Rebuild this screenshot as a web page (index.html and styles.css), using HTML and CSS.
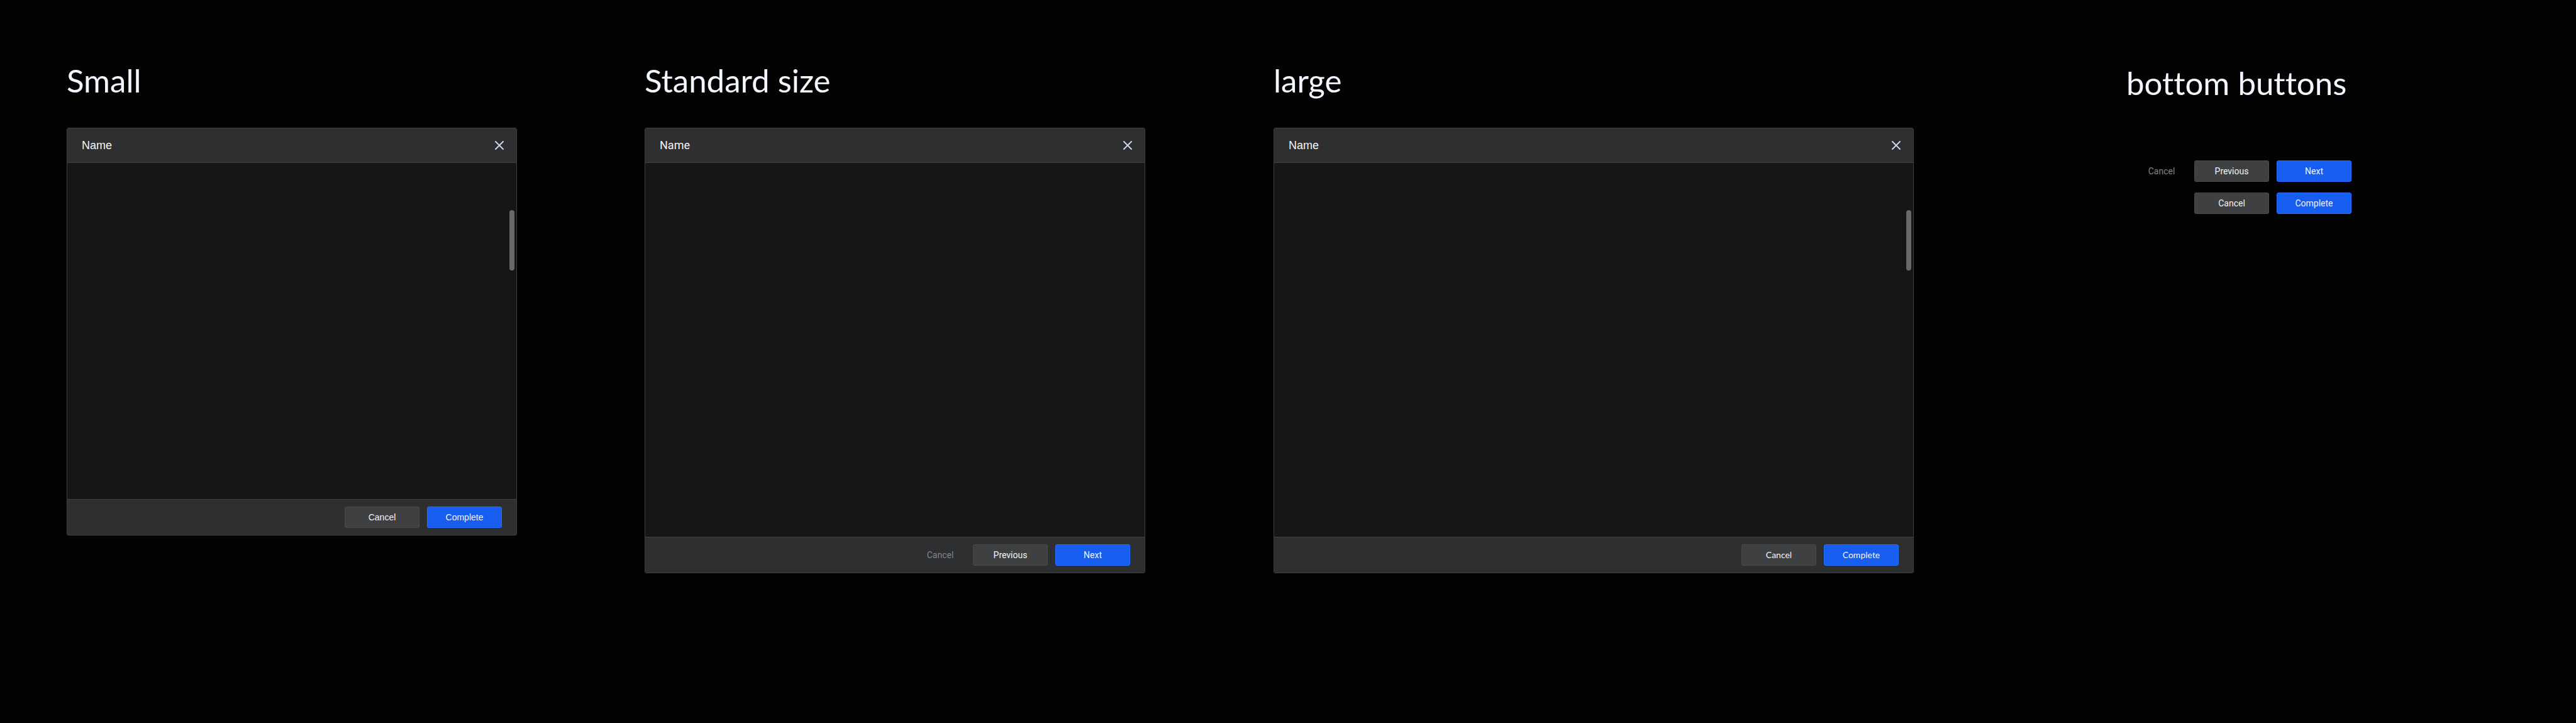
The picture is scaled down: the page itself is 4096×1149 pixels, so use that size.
FILE: index.html
```html
<!DOCTYPE html>
<html lang="en">
<head>
<meta charset="utf-8">
<title>Dialog sizes</title>
<link rel="stylesheet" href="styles.css">
</head>
<body>
<main class="board">
  <section class="column column-small">
    <h1 class="title">Small</h1>
    <div class="dialog font-liberation" role="dialog" aria-labelledby="name-small">
      <header class="dialog-header">
        <h2 class="dialog-name" id="name-small">Name</h2>
        <button class="close" type="button" aria-label="Close"><svg class="close-icon" viewBox="0 0 14 14" aria-hidden="true"><path d="M1 1L13 13M13 1L1 13"/></svg></button>
      </header>
      <div class="dialog-body dialog-body-short"><div class="scroll-thumb"></div></div>
      <footer class="dialog-footer">
        <button class="btn btn-secondary" type="button">Cancel</button>
        <button class="btn btn-primary" type="button">Complete</button>
      </footer>
    </div>
  </section>

  <section class="column column-standard">
    <h1 class="title">Standard size</h1>
    <div class="dialog font-roboto" role="dialog" aria-labelledby="name-standard">
      <header class="dialog-header">
        <h2 class="dialog-name" id="name-standard">Name</h2>
        <button class="close" type="button" aria-label="Close"><svg class="close-icon" viewBox="0 0 14 14" aria-hidden="true"><path d="M1 1L13 13M13 1L1 13"/></svg></button>
      </header>
      <div class="dialog-body"></div>
      <footer class="dialog-footer">
        <button class="btn btn-ghost" type="button">Cancel</button>
        <button class="btn btn-secondary" type="button">Previous</button>
        <button class="btn btn-primary" type="button">Next</button>
      </footer>
    </div>
  </section>

  <section class="column column-large">
    <h1 class="title">large</h1>
    <div class="dialog font-lato" role="dialog" aria-labelledby="name-large">
      <header class="dialog-header">
        <h2 class="dialog-name font-liberation" id="name-large">Name</h2>
        <button class="close" type="button" aria-label="Close"><svg class="close-icon" viewBox="0 0 14 14" aria-hidden="true"><path d="M1 1L13 13M13 1L1 13"/></svg></button>
      </header>
      <div class="dialog-body"><div class="scroll-thumb"></div></div>
      <footer class="dialog-footer">
        <button class="btn btn-secondary" type="button">Cancel</button>
        <button class="btn btn-primary" type="button">Complete</button>
      </footer>
    </div>
  </section>

  <section class="column column-buttons">
    <h1 class="title">bottom buttons</h1>
    <div class="button-sets font-roboto">
      <div class="button-row">
        <button class="btn btn-ghost" type="button">Cancel</button>
        <button class="btn btn-secondary" type="button">Previous</button>
        <button class="btn btn-primary" type="button">Next</button>
      </div>
      <div class="button-row">
        <button class="btn btn-secondary" type="button">Cancel</button>
        <button class="btn btn-primary" type="button">Complete</button>
      </div>
    </div>
  </section>
</main>
</body>
</html>
```
FILE: styles.css
```css
* {
  box-sizing: border-box;
}

body {
  margin: 0;
  background: #030303;
  color: #f2f6ff;
  font-family: Lato, sans-serif;
}

.board {
  display: grid;
  grid-template-columns: minmax(0, 919fr) minmax(0, 1000fr) minmax(0, 1356fr) minmax(0, 715fr);
  align-items: start;
  min-height: 100vh;
  padding: 96px 0 96px 106px;
}

.column-small { padding-right: 203px; }
.column-standard { padding-right: 204px; }
.column-large { padding-right: 338px; }
.column-buttons { padding: 4px 357px 0 0; }

.font-liberation { font-family: "Liberation Sans", Arial, sans-serif; }
.font-roboto { font-family: Roboto, sans-serif; }
.font-lato { font-family: Lato, sans-serif; }

.title {
  margin: 0 0 43px;
  font-size: 51px;
  line-height: 64px;
  font-weight: 400;
  font-variant-ligatures: none;
  white-space: nowrap;
}

.dialog {
  border: 1px solid #3e3f41;
  border-radius: 3px;
  background: #161616;
  overflow: hidden;
}

.dialog-header {
  display: flex;
  align-items: center;
  justify-content: space-between;
  height: 55px;
  padding: 0 16px 0 23px;
  background: #2e2f31;
  border-bottom: 1px solid #3e3f41;
}

.dialog-name {
  margin: 0;
  font-size: 18px;
  line-height: 24px;
  font-weight: 400;
  color: #f5f5f5;
}

.close {
  display: flex;
  padding: 4px;
  border: 0;
  background: none;
}

.close-icon {
  width: 14px;
  height: 14px;
  fill: none;
  stroke: #cbd5ea;
  stroke-width: 2;
  stroke-linecap: round;
}

.dialog-body {
  position: relative;
  min-height: 594px;
}

.dialog-body-short {
  min-height: 534px;
}

.scroll-thumb {
  position: absolute;
  top: 75px;
  right: 3px;
  width: 8px;
  height: 96px;
  border-radius: 4px;
  background: #686868;
}

.dialog-footer {
  display: flex;
  justify-content: flex-end;
  gap: 12px;
  padding: 11px 23px;
  background: #2e2f31;
  border-top: 1px solid #3e3f41;
}

.button-sets {
  display: flex;
  flex-direction: column;
  gap: 17px;
  padding-top: 48px;
}

.button-row {
  display: flex;
  justify-content: flex-end;
  gap: 12px;
}

.btn {
  width: 119px;
  height: 34px;
  padding: 0;
  border: 1px solid transparent;
  border-radius: 3px;
  font-family: inherit;
  font-size: 14px;
  line-height: 20px;
  color: #f2f4f8;
}

.btn-primary {
  background: #165df0;
  border-color: #2b6dff;
}

.btn-secondary {
  background: #3f4042;
  border-color: #4a4b4d;
}

.btn-ghost {
  width: 80px;
  background: none;
  color: #82848f;
}
```
